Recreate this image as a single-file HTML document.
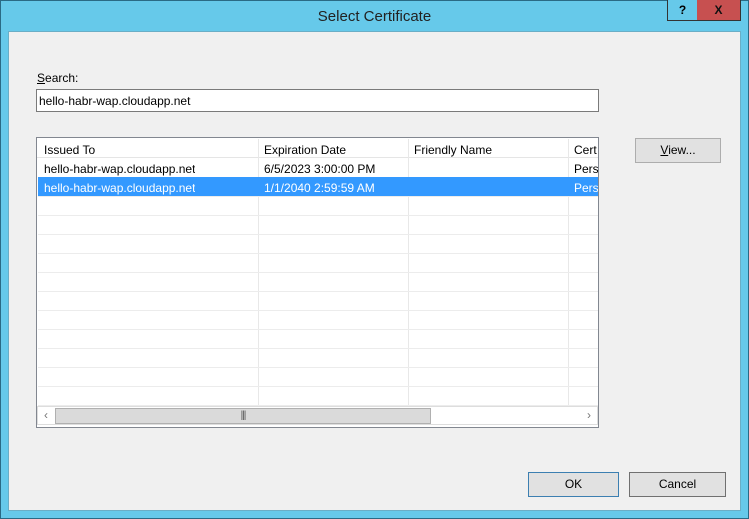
<!DOCTYPE html><html><head><style>
*{margin:0;padding:0;box-sizing:border-box}
body{width:749px;height:519px;background:#66c9ea;position:relative;overflow:hidden;font-family:"Liberation Sans",sans-serif;font-size:12px;color:#000}
.frame{position:absolute;left:0;top:0;width:749px;height:519px;border:1px solid #2a6a85}
.title{position:absolute;left:0;top:8px;width:749px;text-align:center;font-size:15px;color:#222}
.client{position:absolute;left:8px;top:31px;width:733px;height:480px;background:#f0f0f0;border:1px solid #6aaec6}
.ab{position:absolute}
.btn{position:absolute;background:#e1e1e1;border:1px solid #adadad;text-align:center;line-height:23px}
.cell{position:absolute;white-space:nowrap;overflow:hidden}
</style></head><body>
<div class="frame"></div>
<div class="title">Select Certificate</div>
<div class="ab" style="left:667px;top:0;width:31px;height:21px;border:1px solid #333;border-top:none;background:#66c9ea;text-align:center;font-weight:bold;line-height:20px">?</div>
<div class="ab" style="left:697px;top:0;width:44px;height:21px;border:1px solid #333;border-top:none;border-left:none;background:#c75050;text-align:center;font-weight:bold;line-height:20px;color:#111">X</div>
<div class="client"></div>
<div class="ab" style="left:37px;top:71px"><u>S</u>earch:</div>
<div class="ab" style="left:36px;top:89px;width:563px;height:23px;background:#fff;border:1px solid #7a7a7a;padding:4px 2px">hello-habr-wap.cloudapp.net</div>
<div class="ab" style="left:36px;top:137px;width:563px;height:291px;background:#fff;border:1px solid #828790"></div>
<div class="ab" style="left:37px;top:138px;width:561px;height:20px;border-bottom:1px solid #e5e5e5"></div>
<div id="g"></div>
<div class="ab" style="left:38px;top:177px;width:560px;height:19px;background:#3399ff"></div>
<div class="cell" style="left:44px;top:143px">Issued To</div>
<div class="cell" style="left:264px;top:143px">Expiration Date</div>
<div class="cell" style="left:414px;top:143px">Friendly Name</div>
<div class="cell" style="left:574px;top:143px;width:24px">Cert</div>
<div class="cell" style="left:44px;top:162px">hello-habr-wap.cloudapp.net</div>
<div class="cell" style="left:264px;top:162px">6/5/2023 3:00:00 PM</div>
<div class="cell" style="left:574px;top:162px;width:24px">Pers</div>
<div class="cell" style="left:44px;top:181px;color:#fff">hello-habr-wap.cloudapp.net</div>
<div class="cell" style="left:264px;top:181px;color:#fff">1/1/2040 2:59:59 AM</div>
<div class="cell" style="left:574px;top:181px;width:24px;color:#fff">Pers</div>
<div class="ab" style="left:37px;top:406px;width:561px;height:19px;background:#fff;border:1px solid #ddd"></div>
<div class="ab" style="left:38px;top:407px;width:16px;height:17px;text-align:center;color:#777;line-height:16px">&lsaquo;</div>
<div class="ab" style="left:55px;top:408px;width:376px;height:16px;background:#dadada;border:1px solid #b0b0b0;text-align:center;font-size:10px;line-height:14px;color:#555;letter-spacing:-1px">|||</div>
<div class="ab" style="left:581px;top:407px;width:16px;height:17px;text-align:center;color:#777;line-height:16px">&rsaquo;</div>
<div class="btn" style="left:635px;top:138px;width:86px;height:25px"><u>V</u>iew...</div>
<div class="btn" style="left:528px;top:472px;width:91px;height:25px;border-color:#3c7fb1">OK</div>
<div class="btn" style="left:629px;top:472px;width:97px;height:25px;border-color:#707070">Cancel</div>
<script>
var g=document.getElementById('g'),h='';
[258,408,568].forEach(function(x){h+='<div class="ab" style="left:'+x+'px;top:139px;width:1px;height:267px;background:#e8e8e8"></div>'});
for(var y=177;y<406;y+=19)h+='<div class="ab" style="left:38px;top:'+y+'px;width:560px;height:1px;background:#ececec"></div>';
g.innerHTML=h;
</script>
</body></html>
